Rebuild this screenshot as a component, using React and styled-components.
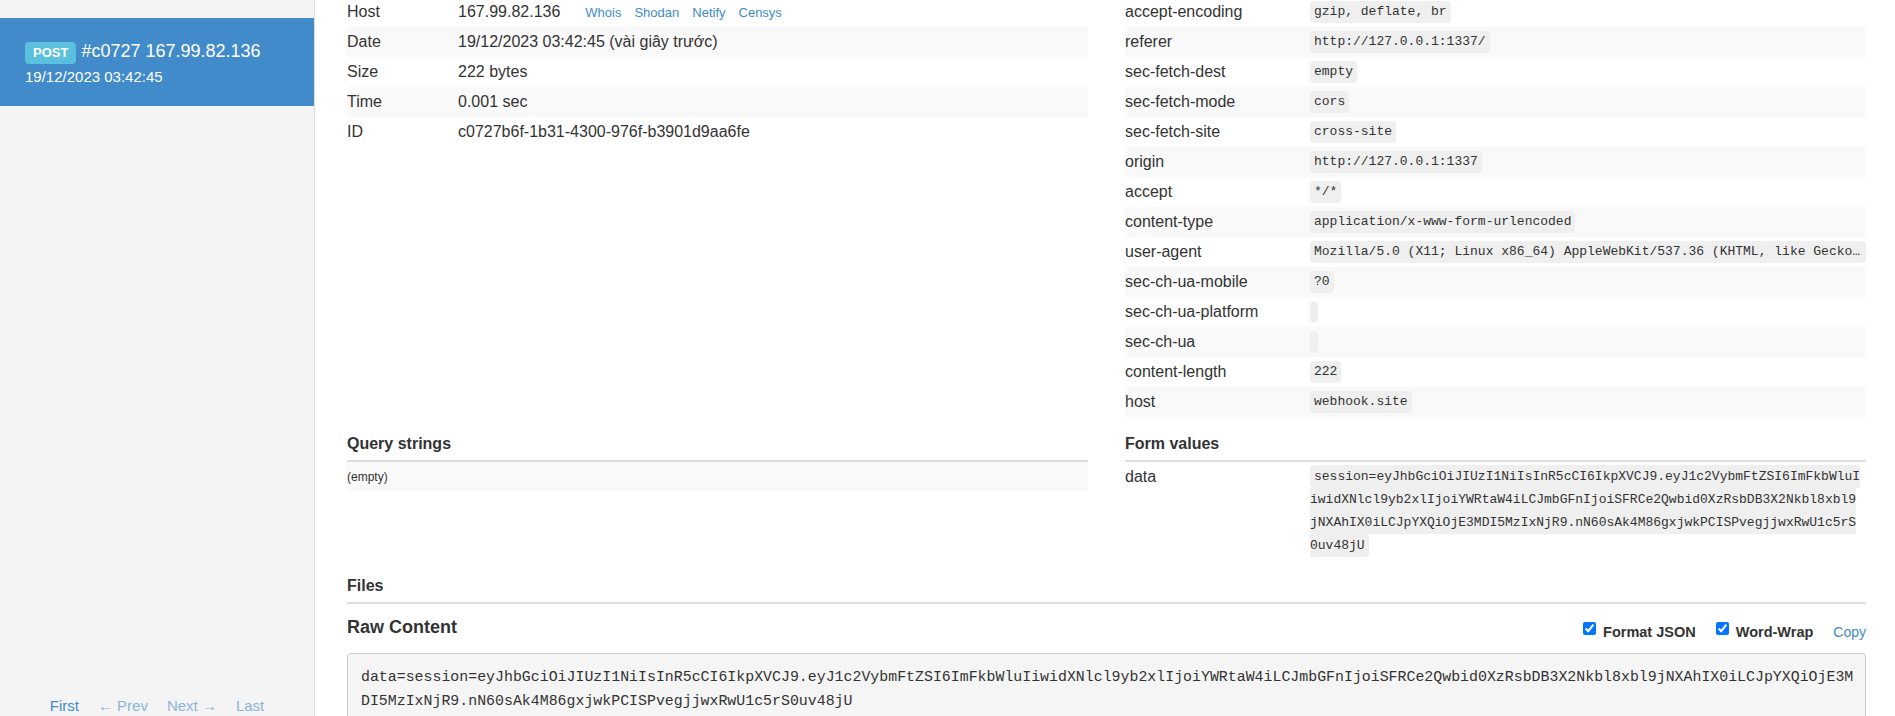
import React from 'react';
import styled, { createGlobalStyle } from 'styled-components';

const GlobalStyle = createGlobalStyle`
  html, body {
    margin: 0;
    padding: 0;
    background: #fff;
    overflow: hidden;
  }
  body {
    font-family: "Liberation Sans", Arial, sans-serif;
    font-size: 16px;
    color: #333;
  }
  * {
    box-sizing: border-box;
  }
`;

const Page = styled.div`
  display: flex;
  align-items: flex-start;
  min-height: 100vh;
`;

const Sidebar = styled.aside`
  width: 315px;
  flex-shrink: 0;
  height: 100vh;
  background: #f4f4f4;
  border-right: 1px solid #ddd;
  display: flex;
  flex-direction: column;
  padding-top: 18px;
`;

const RequestItem = styled.div`
  height: 88px;
  background: #428bca;
  color: #fff;
  padding: 22px 20px 0 25px;
`;

const ItemTitle = styled.div`
  display: flex;
  align-items: baseline;
  gap: 5px;
  font-size: 18px;
  line-height: 22px;
`;

const MethodLabel = styled.span`
  display: inline-block;
  background: #5bc0de;
  color: #fff;
  font-size: 13px;
  font-weight: bold;
  line-height: 13px;
  padding: 4px 8px 5px;
  border-radius: 4px;
`;

const ItemDate = styled.div`
  font-size: 15px;
  line-height: 20px;
  margin-top: 3px;
`;

const Pager = styled.nav`
  margin-top: auto;
  display: flex;
  justify-content: center;
  gap: 19px;
  font-size: 15px;
  line-height: 20px;
`;

const PagerLink = styled.a`
  color: #428bca;
  text-decoration: none;
  opacity: ${({ $disabled }) => ($disabled ? 0.6 : 1)};
`;

const Main = styled.main`
  flex: 1;
  min-width: 0;
  padding: 0 29px 0 32px;
  margin-top: -3px;
`;

const Columns = styled.div`
  display: grid;
  grid-template-columns: 1fr 1fr;
  column-gap: 37px;
`;

const Table = styled.div`
  display: flex;
  flex-direction: column;
`;

const Row = styled.div`
  display: grid;
  grid-template-columns: ${({ $labelWidth }) => $labelWidth}px minmax(0, 1fr);
  height: 30px;
  padding: 5px 0;
  line-height: 20px;
  background: ${({ $striped }) => ($striped ? '#f9f9f9' : 'transparent')};
`;

const Cell = styled.div`
  min-width: 0;
  white-space: nowrap;
`;

const CodeCell = styled.div`
  min-width: 0;
  display: flex;
  align-items: flex-start;
`;

const LinkList = styled.span`
  display: inline-flex;
  gap: 13px;
  margin-left: 25px;
  font-size: 13px;
`;

const TextLink = styled.a`
  color: #428bca;
  text-decoration: none;
`;

const Code = styled.code`
  display: block;
  max-width: 100%;
  min-height: 22px;
  margin: -1px 0;
  padding: 2px 4px;
  font-family: "Liberation Mono", "DejaVu Sans Mono", monospace;
  font-size: 13px;
  line-height: 18px;
  color: #333;
  background: #efefef;
  border-radius: 4px;
  overflow: hidden;
  text-overflow: ellipsis;
  white-space: nowrap;
`;

const SectionTitle = styled.h5`
  margin: ${({ $top }) => $top}px 0 0;
  padding-bottom: 6px;
  font-size: 16px;
  line-height: 20px;
  font-weight: bold;
  border-bottom: 2px solid #ddd;
`;

const EmptyRow = styled.div`
  background: #f9f9f9;
  padding: 5px 0 4px;
  font-size: 12px;
  line-height: 20px;
`;

const FormRow = styled.div`
  display: grid;
  grid-template-columns: 185px minmax(0, 1fr);
  padding: 3px 3px 5px 0;
`;

const FormLabel = styled.div`
  margin-top: 2px;
  line-height: 20px;
`;

const WrappedCode = styled.code`
  padding: 4px 4px;
  font-family: "Liberation Mono", "DejaVu Sans Mono", monospace;
  font-size: 13px;
  line-height: 23px;
  background: #efefef;
  border-radius: 4px;
  word-break: break-all;
`;

const RawHeader = styled.div`
  display: flex;
  justify-content: space-between;
  align-items: flex-start;
  margin-top: 12px;
  height: 37px;
`;

const RawTitle = styled.h4`
  margin: 0;
  font-size: 18px;
  line-height: 22px;
  font-weight: bold;
`;

const Options = styled.div`
  display: flex;
  align-items: flex-start;
  gap: 20px;
  padding-top: 5.5px;
  line-height: 20px;
`;

const Option = styled.label`
  display: flex;
  align-items: flex-start;
  font-size: 14.5px;
  font-weight: bold;
  color: #333;
`;

const Check = styled.input`
  width: 13px;
  height: 13px;
  margin: 0.5px 7px 0 0;
  accent-color: #0075ff;
`;

const CopyLink = styled.a`
  color: #428bca;
  font-size: 14px;
  text-decoration: none;
`;

const RawBody = styled.pre`
  margin: 0;
  padding: 12px 8px 12px 13px;
  min-height: 120px;
  background: #f5f5f5;
  border: 1px solid #ccc;
  border-radius: 4px;
  font-family: "Liberation Mono", "DejaVu Sans Mono", monospace;
  font-size: 14.9px;
  line-height: 23.5px;
  color: #333;
  white-space: pre-wrap;
  word-break: break-all;
`;

const token =
  'eyJhbGciOiJIUzI1NiIsInR5cCI6IkpXVCJ9.eyJ1c2VybmFtZSI6ImFkbWluIiwidXNlcl9yb2xlIjoiYWRtaW4iLCJmbGFnIjoiSFRCe2Qwbid0XzRsbDB3X2Nkbl8xbl9jNXAhIX0iLCJpYXQiOjE3MDI5MzIxNjR9.nN60sAk4M86gxjwkPCISPvegjjwxRwU1c5rS0uv48jU';

const details = [
  ['Date', '19/12/2023 03:42:45 (vài giây trước)'],
  ['Size', '222 bytes'],
  ['Time', '0.001 sec'],
  ['ID', 'c0727b6f-1b31-4300-976f-b3901d9aa6fe'],
];

const headers = [
  ['accept-encoding', 'gzip, deflate, br'],
  ['referer', 'http://127.0.0.1:1337/'],
  ['sec-fetch-dest', 'empty'],
  ['sec-fetch-mode', 'cors'],
  ['sec-fetch-site', 'cross-site'],
  ['origin', 'http://127.0.0.1:1337'],
  ['accept', '*/*'],
  ['content-type', 'application/x-www-form-urlencoded'],
  [
    'user-agent',
    'Mozilla/5.0 (X11; Linux x86_64) AppleWebKit/537.36 (KHTML, like Gecko) HeadlessChrome/120.0.6099.109 Safari/537.36',
  ],
  ['sec-ch-ua-mobile', '?0'],
  ['sec-ch-ua-platform', ''],
  ['sec-ch-ua', ''],
  ['content-length', '222'],
  ['host', 'webhook.site'],
];

const lookups = ['Whois', 'Shodan', 'Netify', 'Censys'];

const App = () => {
  return (
    <Page>
      <GlobalStyle />
      <Sidebar>
        <RequestItem>
          <ItemTitle>
            <MethodLabel>POST</MethodLabel>
            <span>#c0727 167.99.82.136</span>
          </ItemTitle>
          <ItemDate>19/12/2023 03:42:45</ItemDate>
        </RequestItem>
        <Pager>
          <PagerLink href="#">First</PagerLink>
          <PagerLink $disabled>← Prev</PagerLink>
          <PagerLink $disabled>Next →</PagerLink>
          <PagerLink $disabled>Last</PagerLink>
        </Pager>
      </Sidebar>

      <Main>
        <Columns>
          <Table>
            <Row $labelWidth={111}>
              <Cell>Host</Cell>
              <Cell>
                167.99.82.136
                <LinkList>
                  {lookups.map((name) => (
                    <TextLink key={name} href="#">
                      {name}
                    </TextLink>
                  ))}
                </LinkList>
              </Cell>
            </Row>
            {details.map(([label, value], i) => (
              <Row key={label} $labelWidth={111} $striped={i % 2 === 0}>
                <Cell>{label}</Cell>
                <Cell>{value}</Cell>
              </Row>
            ))}
          </Table>

          <Table>
            {headers.map(([name, value], i) => (
              <Row key={name} $labelWidth={185} $striped={i % 2 === 1}>
                <Cell>{name}</Cell>
                <CodeCell>
                  <Code>{value}</Code>
                </CodeCell>
              </Row>
            ))}
          </Table>

          <div>
            <SectionTitle $top={17}>Query strings</SectionTitle>
            <EmptyRow>(empty)</EmptyRow>
          </div>

          <div>
            <SectionTitle $top={17}>Form values</SectionTitle>
            <FormRow>
              <FormLabel>data</FormLabel>
              <div>
                <WrappedCode>{`session=${token}`}</WrappedCode>
              </div>
            </FormRow>
          </div>
        </Columns>

        <SectionTitle $top={14}>Files</SectionTitle>

        <RawHeader>
          <RawTitle>Raw Content</RawTitle>
          <Options>
            <Option>
              <Check type="checkbox" defaultChecked />
              Format JSON
            </Option>
            <Option>
              <Check type="checkbox" defaultChecked />
              Word-Wrap
            </Option>
            <CopyLink href="#">Copy</CopyLink>
          </Options>
        </RawHeader>
        <RawBody>{`data=session=${token}`}</RawBody>
      </Main>
    </Page>
  );
};

export default App;
